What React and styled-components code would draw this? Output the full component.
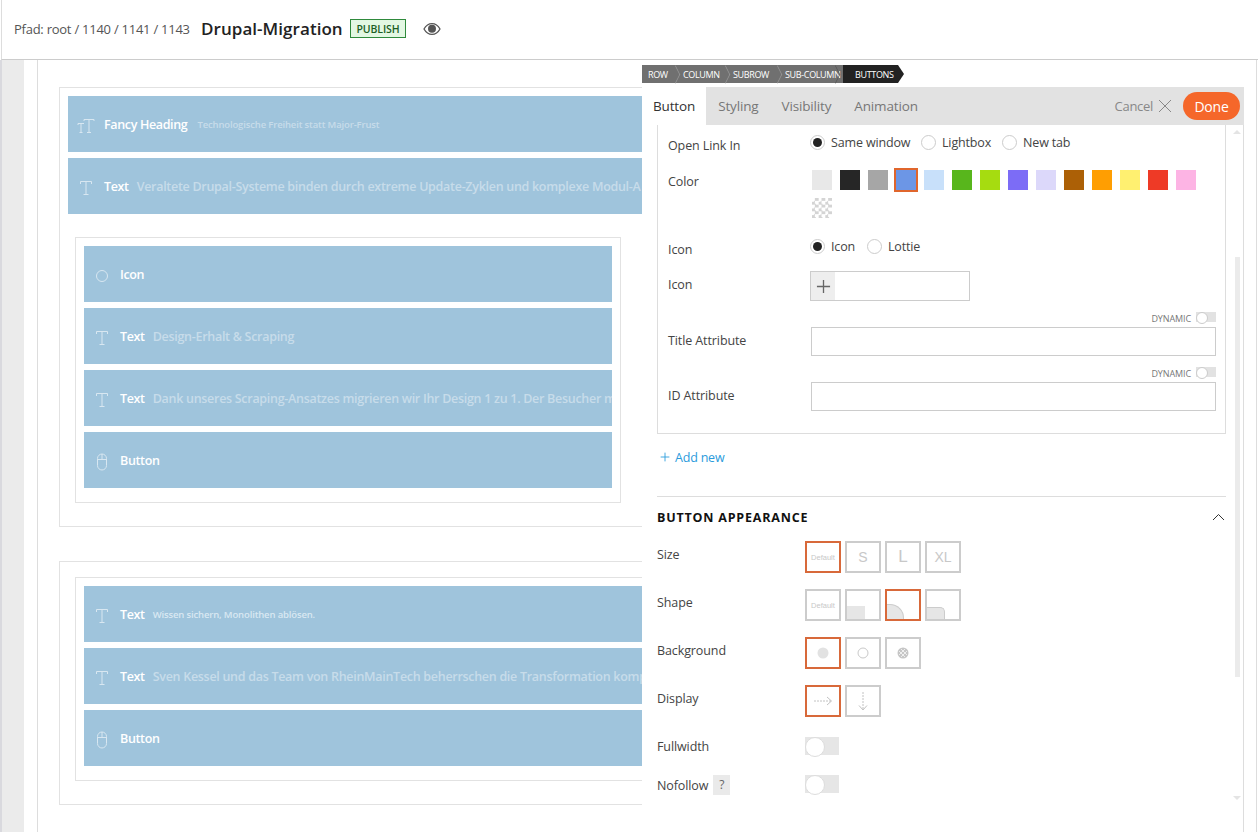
import React from "react";
import styled, { createGlobalStyle } from "styled-components";

const Global = createGlobalStyle`
  html, body { margin: 0; padding: 0; background: #fff; }
  body { font-family: "Open Sans", "Noto Sans", "Liberation Sans", sans-serif; color: #333; }
  * { box-sizing: border-box; }
`;

const Page = styled.div`
  position: relative; width: 1258px; height: 832px; overflow: hidden; background: #fff;
  display: flex; flex-direction: column;
`;
const TopBar = styled.header`
  height: 60px; flex: none; display: flex; align-items: center; padding: 0 0 2px 12px;
  border-bottom: 1px solid #ccc; border-left: 1px solid #ddd; margin-left: 1px;
`;
const Path = styled.span`font-size: 13px; letter-spacing: -0.25px; color: #555; margin-right: 11px; width: 176px; white-space: nowrap;`;
const Title = styled.h1`margin: 0 7px 0 0; font-size: 17px; font-weight: 600; letter-spacing: 0.05px; color: #222; width: 142px; white-space: nowrap;`;
const Badge = styled.span`
  width: 56px; height: 19px; display: flex; align-items: center; justify-content: center;
  border: 1px solid #2f8a3c; background: #e3f8e3; color: #1d5f26; font-size: 10.5px; font-weight: 600; letter-spacing: -0.1px;
`;
const EyeWrap = styled.span`margin-left: 17px; display: flex; color: #555;`;

const Workspace = styled.main`flex: 1; display: flex; min-height: 0;`;
const Gutter = styled.div`width: 24px; flex: none; background: #ebebeb; border-left: 2px solid #d9d9de;`;
const Canvas = styled.div`
  margin: 0 1px 0 13px; flex: 1; min-width: 0; border-left: 1px solid #ddd; border-right: 1px solid #ddd; padding: 27px 0 0 21px;
  display: flex; flex-direction: column; gap: 34px;
`;
const Section = styled.section`
  width: 1170px; border: 1px solid #e2e2e2; padding: ${p => p.$top}px 8px 23px 8px;
  display: flex; flex-direction: column; gap: 6px; flex: none;
`;
const SubBox = styled.div`
  width: ${p => p.$w}px; margin: ${p => p.$mt}px 0 0 7px; border: 1px solid #e2e2e2; padding: 8px 8px 14px;
  display: flex; flex-direction: column; gap: 6px;
`;
const Row = styled.div`
  height: 56px; background: #9fc4dc; display: flex; align-items: center; padding-left: 9px; overflow: hidden; white-space: nowrap; flex: none;
`;
const RowIcon = styled.span`width: 18px; height: 24px; flex: none; margin: 3px 9px 0 0; display: flex; align-items: center; justify-content: center; color: #d8e7f1;`;
const RowName = styled.span`font-size: 12.5px; font-weight: 600; letter-spacing: -0.35px; color: #fff;`;
const RowText = styled.span`
  margin-left: ${p => p.$ml}px; font-weight: 600;
  color: ${p => (p.$bright ? "#d9e8f2" : "#c7dcea")};
  font-size: ${p => (p.$small ? 9.5 : 12.5)}px; letter-spacing: ${p => (p.$small ? -0.15 : -0.29)}px;
`;

const Panel = styled.aside`
  position: absolute; left: 642px; top: 65px; width: 602px; height: 767px; display: flex; flex-direction: column;
`;
const Crumbs = styled.nav`display: flex; height: 18px; margin-bottom: 4px; width: 262px;`;
const Crumb = styled.span`
  position: relative; height: 18px; display: flex; align-items: center; flex: none; width: ${p => p.$w}px; padding-left: ${p => p.$pl || 0}px;
  background: ${p => (p.$dark ? "#222" : "#707070")}; color: #fff; font-size: 9px; letter-spacing: -0.35px; white-space: nowrap;
  ${p => p.$dark ? "clip-path: polygon(0 0, calc(100% - 6px) 0, 100% 50%, calc(100% - 6px) 100%, 0 100%);" : ""}
  ${p => p.$sep ? `&::after { content: ""; position: absolute; right: 1px; top: 3px; width: 12px; height: 12px; border-top: 1px solid ${p.$sep}; border-right: 1px solid ${p.$sep}; transform: scaleX(.5) rotate(45deg); }` : ""}
`;
const TabBar = styled.div`height: 38px; background: #e2e2e2; display: flex; align-items: center; flex: none;`;
const Tab = styled.span`
  height: 38px; display: flex; align-items: center; padding: 0 ${p => p.$pr}px 0 ${p => p.$pl}px; font-size: 13.5px; letter-spacing: -0.15px;
  ${p => (p.$active ? "background: #fff; color: #333;" : "color: #777;")}
`;
const Cancel = styled.span`margin-left: auto; display: flex; align-items: center; gap: 5px; color: #888; font-size: 13px; letter-spacing: -0.3px; margin-right: 11px;`;
const Done = styled.button`
  width: 57px; height: 28px; border: 0; border-radius: 14px; background: #f5672a; color: #fff; font: 500 14px "Open Sans", sans-serif; letter-spacing: -0.2px; margin-right: 4px; padding: 0;
`;
const PanelBody = styled.div`
  position: relative; flex: 1; background: #fff; border-right: 1px solid #ddd; padding: 0 17px 0 15px;
`;
const ItemBox = styled.div`border: 1px solid #ddd; border-top: 0; padding: 0 9px 22px 10px;`;
const FormRow = styled.div`display: grid; grid-template-columns: ${p => p.$col || 142}px 1fr; height: ${p => p.$h}px;`;
const Label = styled.label`font-size: 12.5px; letter-spacing: -0.1px; color: #444; line-height: 20px; padding-top: ${p => p.$pt || 0}px; display: flex; align-items: flex-start; height: fit-content;`;
const Radios = styled.div`display: flex; align-items: center; height: 16px; margin-top: ${p => p.$mt}px; font-size: 12.5px; letter-spacing: -0.15px; color: #444;`;
const Radio = styled.span`
  width: 15px; height: 15px; border-radius: 50%; border: 1px solid #ccc; background: #fff; display: flex; align-items: center; justify-content: center; flex: none;
  margin: 0 6px 0 0;
  &::after { content: ""; display: ${p => (p.$on ? "block" : "none")}; width: 9px; height: 9px; border-radius: 50%; background: #222; }
`;
const RadioText = styled.span`width: ${p => p.$w}px; white-space: nowrap;`;
const Swatches = styled.div`display: flex; flex-wrap: wrap; align-content: flex-start; gap: 8px; width: 392px; margin-top: 5px; margin-left: 2px;`;
const Swatch = styled.span`
  width: 20px; height: 20px; background: ${p => p.$c};
  ${p => (p.$on ? "box-shadow: 0 0 0 2px #e0662c;" : "")}
`;
const Checker = styled.span`
  width: 20px; height: 20px;
  background: repeating-conic-gradient(#d4d4d4 0 25%, #fff 0 50%) 0 0 / 6.67px 6.67px;
`;
const IconField = styled.div`width: 160px; height: 30px; border: 1px solid #ccc; display: flex;`;
const AddCell = styled.span`width: 24px; background: #eee; display: flex; align-items: center; justify-content: center; color: #666;`;
const Attr = styled.div`margin-bottom: ${p => p.$mb}px;`;
const Dyn = styled.div`height: 15px; display: flex; justify-content: flex-end; align-items: flex-start; font-size: 9px; letter-spacing: -0.1px; color: #777; gap: 5px; line-height: 13px;`;
const MiniToggle = styled.span`
  width: 20px; height: 10px; background: #e2e2e2; position: relative; display: block;
  &::after { content: ""; position: absolute; left: 0; top: 0; width: 10px; height: 10px; border-radius: 50%; background: #fff; border: 1px solid #ccc; }
`;
const TextInput = styled.div`height: 29px; margin-left: 1px; border: 1px solid #ccc; background: #fff;`;
const AddNew = styled.div`margin-top: 13px; height: 20px; display: flex; align-items: center; gap: 5px; color: #2a9bdc; font-size: 12.5px; letter-spacing: -0.2px; padding-left: 3px;`;
const Divider = styled.hr`margin: 29px 0 0; border: 0; border-top: 1px solid #ddd;`;
const SectionHead = styled.div`margin-top: 10px; height: 20px; margin-bottom: 14px; display: flex; justify-content: space-between; align-items: center; padding-right: 1px;`;
const HeadText = styled.h2`margin: 0; font-size: 12.5px; font-weight: 700; color: #111; letter-spacing: 0.8px;`;
const OptRow = styled.div`display: grid; grid-template-columns: 148px 1fr; height: ${p => p.$h}px; margin-bottom: ${p => p.$mb}px;`;
const OptLabel = styled.div`font-size: 12.5px; letter-spacing: -0.1px; color: #444; line-height: 20px; padding-top: ${p => p.$pt || 0}px; display: flex; gap: 5px; white-space: nowrap;`;
const OptGroup = styled.div`display: flex; gap: 4px;`;
const Opt = styled.div`
  position: relative; width: 36px; height: 32px; border: 2px solid ${p => (p.$on ? "#d8693a" : "#ccc")}; display: flex; align-items: center; justify-content: center;
  color: #c8c8c8; font-size: ${p => p.$fs || 14}px; font-family: "Liberation Sans", sans-serif;
`;
const Shape = styled.span`
  position: absolute; left: 0; bottom: 0; background: #e6e6e6; width: ${p => p.$w}px; height: ${p => p.$h}px;
  border-top-right-radius: ${p => p.$r}px;
  ${p => (p.$line ? "border: 1px solid #ccc; border-left: 0; border-bottom: 0;" : "")}
`;
const Toggle = styled.span`
  display: block; position: relative; width: 34px; height: 18px; background: #e6e6e6;
  &::after { content: ""; position: absolute; left: 0; top: 0; width: 18px; height: 18px; border-radius: 50%; background: #fff; border: 1px solid #ddd; }
`;
const Help = styled.span`width: 17px; height: 20px; margin-top: -1px; background: #eaeaea; display: flex; align-items: center; justify-content: center; font-size: 12px; color: #666;`;
const ScrollTrack = styled.div`position: absolute; right: 3px; top: 132px; width: 5px; height: 420px; background: #ebebeb;`;
const ScrollUp = styled.div`position: absolute; right: 2px; top: 5px; width: 0; height: 0; border: 4px solid transparent; border-top: 0; border-bottom: 4px solid #e4e4e4;`;
const ScrollDown = styled.div`position: absolute; right: 2px; top: 671px; width: 0; height: 0; border: 4px solid transparent; border-bottom: 0; border-top: 4px solid #e4e4e4;`;

const TIcon = () => (
  <svg width="14" height="16" viewBox="0 0 14 16" fill="none" stroke="currentColor" strokeWidth="1">
    <path d="M1.5 4V1.5H12.5V4M7 1.5V14.5M4.5 14.5H9.5" />
  </svg>
);
const FancyIcon = () => (
  <svg width="18" height="16" viewBox="0 0 18 16" fill="none" stroke="currentColor" strokeWidth="1">
    <path d="M7 3V1.5H17V3M12 1.5V14.5M10 14.5H14" />
    <path d="M1 7V5.5H7M4 5.5V14.5M2.5 14.5H5.5" />
  </svg>
);
const CircleIcon = () => (
  <svg width="14" height="14" viewBox="0 0 14 14" fill="none" stroke="currentColor" strokeWidth="1"><circle cx="7" cy="7" r="5.5" /></svg>
);
const MouseIcon = () => (
  <svg width="12" height="18" viewBox="0 0 12 18" fill="none" stroke="currentColor" strokeWidth="1">
    <rect x="1.5" y="1" width="9" height="16" rx="4.5" /><path d="M1.5 6.5H10.5M6 1V6.5" />
  </svg>
);
const Eye = () => (
  <svg width="18" height="14" viewBox="0 0 18 14" fill="none">
    <path d="M1 7C3 3.4 5.8 1.6 9 1.6S15 3.4 17 7C15 10.6 12.2 12.4 9 12.4S3 10.6 1 7Z" stroke="currentColor" strokeWidth="1.3" />
    <circle cx="9" cy="6.8" r="4" fill="currentColor" />
  </svg>
);
const Plus = ({ s = 16, c = "currentColor" }) => (
  <svg width={s} height={s} viewBox="0 0 16 16" stroke={c} strokeWidth="1.4"><path d="M8 1V15M1 8H15" /></svg>
);
const Close = () => (
  <svg width="14" height="14" viewBox="0 0 14 14" stroke="#888" strokeWidth="1" fill="none"><path d="M1 1L13 13M13 1L1 13" /></svg>
);
const Chevron = () => (
  <svg width="13" height="8" viewBox="0 0 13 8" stroke="#333" strokeWidth="1" fill="none"><path d="M1 7L6.5 1.5L12 7" /></svg>
);
const Dot = ({ type }) => (
  <svg width="16" height="16" viewBox="0 0 16 16">
    {type === "fill" && <circle cx="8" cy="8" r="5.5" fill="#e2e2e2" />}
    {type === "ring" && <circle cx="8" cy="8" r="5" fill="none" stroke="#c9c9c9" />}
    {type === "hatch" && <g><circle cx="8" cy="8" r="5.5" fill="#c6c6c6" /><path d="M4 6L10 12M6 4L12 10M4 10L10 4M6 12L12 6" stroke="#fff" strokeWidth=".7" /></g>}
  </svg>
);
const ArrowRight = () => (
  <svg width="20" height="10" viewBox="0 0 20 10" fill="none" stroke="#c2c2c2"><path d="M1 5H18" strokeDasharray="2 1" /><path d="M14 1L18.5 5L14 9" /></svg>
);
const ArrowDown = () => (
  <svg width="10" height="19" viewBox="0 0 10 19" fill="none" stroke="#c2c2c2"><path d="M5 0V17.5" strokeDasharray="2 1" /><path d="M1 13.5L5 18L9 13.5" /></svg>
);

const SWATCHES = ["#e8e8e8", "#262626", "#a6a6a6", "#6c96e6", "#c8e0fa", "#58b61c", "#a6dc10", "#7c6cf6", "#dcd8fa", "#ac6006", "#ff9e02", "#fff070", "#ee3a26", "#fdb4e4"];

function ElementRow({ icon, name, text, small, bright, gap = 8 }) {
  return (
    <Row>
      <RowIcon>{icon}</RowIcon>
      <RowName>{name}</RowName>
      {text && <RowText $small={small} $bright={bright} $ml={gap}>{text}</RowText>}
    </Row>
  );
}

export default function App() {
  return (
    <Page>
      <Global />
      <TopBar>
        <Path>Pfad: root / 1140 / 1141 / 1143</Path>
        <Title>Drupal-Migration</Title>
        <Badge>PUBLISH</Badge>
        <EyeWrap><Eye /></EyeWrap>
      </TopBar>
      <Workspace>
        <Gutter />
        <Canvas>
          <Section $top={8}>
            <ElementRow icon={<FancyIcon />} name="Fancy Heading" text="Technologische Freiheit statt Major-Frust" small gap={10} />
            <ElementRow icon={<TIcon />} name="Text" text="Veraltete Drupal-Systeme binden durch extreme Update-Zyklen und komplexe Modul-A" />
            <SubBox $w={546} $mt={17}>
              <ElementRow icon={<CircleIcon />} name="Icon" />
              <ElementRow icon={<TIcon />} name="Text" text="Design-Erhalt & Scraping" />
              <ElementRow icon={<TIcon />} name="Text" text="Dank unseres Scraping-Ansatzes migrieren wir Ihr Design 1 zu 1. Der Besucher m" />
              <ElementRow icon={<MouseIcon />} name="Button" />
            </SubBox>
          </Section>
          <Section $top={15}>
            <SubBox $w={1140} $mt={0}>
              <ElementRow icon={<TIcon />} name="Text" text="Wissen sichern, Monolithen ablösen." small bright />
              <ElementRow icon={<TIcon />} name="Text" text="Sven Kessel und das Team von RheinMainTech beherrschen die Transformation kompl" />
              <ElementRow icon={<MouseIcon />} name="Button" />
            </SubBox>
          </Section>
        </Canvas>
      </Workspace>

      <Panel>
        <Crumbs>
          <Crumb $w={41} $pl={6} $sep="#999">ROW</Crumb>
          <Crumb $w={50} $sep="#999">COLUMN</Crumb>
          <Crumb $w={52} $sep="#999">SUBROW</Crumb>
          <Crumb $w={58} $sep="#555">SUB-COLUMN</Crumb>
          <Crumb $w={61} $pl={12} $dark>BUTTONS</Crumb>
        </Crumbs>
        <TabBar>
          <Tab $active $pl={11} $pr={11}>Button</Tab>
          <Tab $pl={12} $pr={11}>Styling</Tab>
          <Tab $pl={12} $pr={11}>Visibility</Tab>
          <Tab $pl={12} $pr={11}>Animation</Tab>
          <Cancel>Cancel <Close /></Cancel>
          <Done>Done</Done>
        </TabBar>
        <PanelBody>
          <ScrollUp />
          <ScrollTrack />
          <ScrollDown />
          <ItemBox>
            <FormRow $h={40}>
              <Label $pt={11}>Open Link In</Label>
              <Radios $mt={9}>
                <Radio $on /><RadioText $w={90}>Same window</RadioText>
                <Radio /><RadioText $w={60}>Lightbox</RadioText>
                <Radio /><RadioText $w={60}>New tab</RadioText>
              </Radios>
            </FormRow>
            <FormRow $h={65}>
              <Label $pt={7}>Color</Label>
              <Swatches>
                {SWATCHES.map((c, i) => <Swatch key={c} $c={c} $on={i === 3} />)}
                <Checker />
              </Swatches>
            </FormRow>
            <FormRow $h={41}>
              <Label $pt={10}>Icon</Label>
              <Radios $mt={8}>
                <Radio $on /><RadioText $w={36}>Icon</RadioText>
                <Radio /><RadioText $w={60}>Lottie</RadioText>
              </Radios>
            </FormRow>
            <FormRow $h={41}>
              <Label $pt={4}>Icon</Label>
              <IconField><AddCell><Plus s={15} /></AddCell></IconField>
            </FormRow>
            <Attr $mb={11}>
              <Dyn>DYNAMIC <MiniToggle /></Dyn>
              <FormRow $h={29}>
                <Label $pt={4}>Title Attribute</Label>
                <TextInput />
              </FormRow>
            </Attr>
            <Attr $mb={0}>
              <Dyn>DYNAMIC <MiniToggle /></Dyn>
              <FormRow $h={29}>
                <Label $pt={4}>ID Attribute</Label>
                <TextInput />
              </FormRow>
            </Attr>
          </ItemBox>
          <AddNew><Plus s={10} c="#2a9bdc" /> Add new</AddNew>
          <Divider />
          <SectionHead>
            <HeadText>BUTTON APPEARANCE</HeadText>
            <Chevron />
          </SectionHead>
          <OptRow $h={32} $mb={16}>
            <OptLabel $pt={4}>Size</OptLabel>
            <OptGroup>
              <Opt $on $fs={7.5}>Default</Opt>
              <Opt $fs={14}>S</Opt>
              <Opt $fs={17}>L</Opt>
              <Opt $fs={14}>XL</Opt>
            </OptGroup>
          </OptRow>
          <OptRow $h={32} $mb={16}>
            <OptLabel $pt={4}>Shape</OptLabel>
            <OptGroup>
              <Opt $fs={7.5}>Default</Opt>
              <Opt><Shape $w={18} $h={13} $r={0} /></Opt>
              <Opt $on><Shape $w={17} $h={15} $r={14} $line /></Opt>
              <Opt><Shape $w={18} $h={12} $r={5} $line /></Opt>
            </OptGroup>
          </OptRow>
          <OptRow $h={32} $mb={16}>
            <OptLabel $pt={4}>Background</OptLabel>
            <OptGroup>
              <Opt $on><Dot type="fill" /></Opt>
              <Opt><Dot type="ring" /></Opt>
              <Opt><Dot type="hatch" /></Opt>
            </OptGroup>
          </OptRow>
          <OptRow $h={32} $mb={20}>
            <OptLabel $pt={4}>Display</OptLabel>
            <OptGroup>
              <Opt $on><ArrowRight /></Opt>
              <Opt><ArrowDown /></Opt>
            </OptGroup>
          </OptRow>
          <OptRow $h={18} $mb={20}>
            <OptLabel>Fullwidth</OptLabel>
            <Toggle />
          </OptRow>
          <OptRow $h={18} $mb={0}>
            <OptLabel $pt={1}>Nofollow <Help>?</Help></OptLabel>
            <Toggle />
          </OptRow>
        </PanelBody>
      </Panel>
    </Page>
  );
}
